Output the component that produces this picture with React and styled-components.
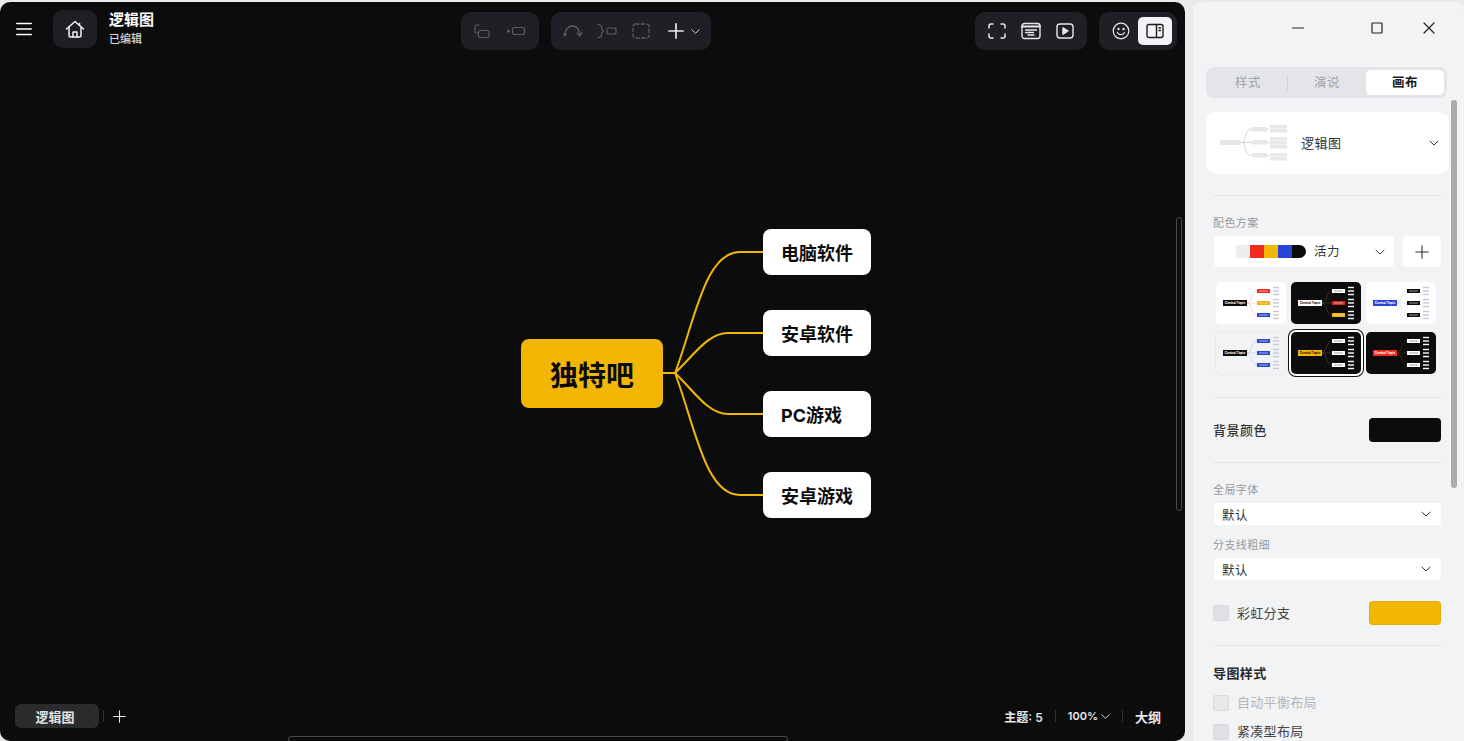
import styled, { createGlobalStyle } from "styled-components";

const GlobalStyle = createGlobalStyle`
    html, body, #root {
        margin: 0;
        padding: 0;
        height: 100%;
    }
    body {
        background: #e9eaec;
        overflow: hidden;
        font-family: Inter, "Noto Sans CJK SC", sans-serif;
    }
`

const Page = styled.div`
    width: 1464px;
    height: 741px;
    padding-top: 2px;
    box-sizing: border-box;
    display: flex;
    gap: 8px;
    overflow: hidden;
`

const Canvas = styled.main`
    position: relative;
    width: 1185px;
    flex-shrink: 0;
    background: #0c0c0d;
    border-radius: 10px;
    display: flex;
    flex-direction: column;
    justify-content: space-between;
    overflow: hidden;
`

const TopBar = styled.header`
    position: relative;
    display: flex;
    align-items: flex-start;
    padding: 8px 8px 0 16px;
`

const DocArea = styled.div`
    width: 445px;
    display: flex;
    align-items: center;
    color: #fff;
`

const IconButton = styled.button`
    border: 0;
    padding: 0 0 0 ${(p) => p.$shift || 0}px;
    background: ${(p) => (p.$active ? "#f2f3f5" : "transparent")};
    color: ${(p) => (p.$active ? "#1a1a1c" : p.$dim ? "#5c5d62" : "#e8e8ea")};
    width: ${(p) => p.$w || 34}px;
    height: 28px;
    border-radius: 5px;
    display: flex;
    align-items: center;
    justify-content: center;
    gap: ${(p) => p.$gap || 0}px;
`

const HomeButton = styled.button`
    border: 0;
    padding: 0;
    margin-left: 21px;
    width: 44px;
    height: 38px;
    border-radius: 10px;
    background: #1f2025;
    color: #f2f2f2;
    display: flex;
    align-items: center;
    justify-content: center;
`

const DocTitle = styled.div`
    margin-left: 12px;
    padding-bottom: 2px;
    display: flex;
    flex-direction: column;
    gap: 3px;
`

const DocName = styled.div`
    font-size: 15px;
    line-height: 18px;
    font-weight: 700;
`

const DocStatus = styled.div`
    font-size: 11px;
    line-height: 14px;
    font-weight: 500;
    color: #d8d8da;
`

const ToolGroup = styled.div`
    margin-top: 2px;
    height: 38px;
    padding: 0 ${(p) => p.$pad ?? 5}px;
    box-sizing: border-box;
    background: #1f2025;
    border-radius: 10px;
    display: flex;
    align-items: center;
    margin-left: ${(p) => p.$left || 0}px;
`

const RightTools = styled.div`
    margin-left: auto;
    display: flex;
    gap: 12px;
`

const BottomBar = styled.footer`
    position: relative;
    display: flex;
    align-items: center;
    justify-content: space-between;
    padding: 0 24px 11px 15px;
    color: #e6e6e8;
`

const SheetTabs = styled.div`
    display: flex;
    align-items: center;
`

const SheetTab = styled.div`
    width: 84px;
    height: 24px;
    box-sizing: border-box;
    padding-right: 4px;
    border-radius: 6px;
    background: #2a2b2d;
    font-size: 13px;
    font-weight: 700;
    color: #e2e2e2;
    display: flex;
    align-items: center;
    justify-content: center;
`

const StatusGroup = styled.div`
    display: flex;
    align-items: center;
`

const StatusText = styled.span`
    font-size: ${(p) => p.$size || 12}px;
    font-weight: 600;
    display: flex;
    align-items: center;
    gap: 3px;
`

const BarSep = styled.i`
    width: 1px;
    height: 12px;
    background: #2e2f32;
    margin: 0 ${(p) => p.$gap || 12}px;
`

const MapNode = styled.div`
    position: absolute;
    left: ${(p) => p.$x}px;
    top: ${(p) => p.$y}px;
    box-sizing: border-box;
    width: 108px;
    height: 46px;
    padding-left: 18px;
    background: #fff;
    border-radius: 8px;
    color: #0c0c0d;
    font-size: 18px;
    font-weight: 700;
    display: flex;
    align-items: center;
    white-space: nowrap;
`

const RootNode = styled.div`
    position: absolute;
    left: 521px;
    top: 337px;
    width: 142px;
    height: 69px;
    background: #f2b705;
    border-radius: 8px;
    color: #0c0c0d;
    font-size: 28px;
    font-weight: 700;
    display: flex;
    align-items: center;
    justify-content: center;
`

const Links = styled.svg`
    position: absolute;
    left: 660px;
    top: 225px;
`

const ScrollV = styled.div`
    position: absolute;
    left: 1176px;
    top: 215px;
    width: 6px;
    height: 294px;
    box-sizing: border-box;
    border: 1px solid #4a4a4c;
    border-radius: 3px;
`

const ScrollH = styled.div`
    position: absolute;
    left: 288px;
    top: 734px;
    width: 500px;
    height: 6px;
    box-sizing: border-box;
    border: 1px solid #4a4a4c;
    border-radius: 3px;
`

const Panel = styled.aside`
    position: relative;
    flex: 1;
    background: #f2f3f5;
    border-radius: 8px 8px 0 0;
    overflow: hidden;
    display: flex;
    flex-direction: column;
`

const WindowBar = styled.div`
    height: 65px;
    flex-shrink: 0;
    display: flex;
    align-items: flex-start;
    color: #222;
`

const WinButton = styled.span`
    position: absolute;
    top: 18px;
    left: ${(p) => p.$x}px;
    width: 16px;
    height: 16px;
    display: flex;
`

const Tabs = styled.div`
    margin-left: 13px;
    width: 241px;
    height: 31px;
    box-sizing: border-box;
    padding: 3px;
    border-radius: 8px;
    background: #e4e5e8;
    display: flex;
    align-items: center;
    flex-shrink: 0;
`

const Tab = styled.div`
    flex: ${(p) => (p.$active ? "0 0 78px" : 1)};
    height: 25px;
    box-sizing: border-box;
    padding-bottom: 2px;
    border-radius: 5px;
    background: ${(p) => (p.$active ? "#fff" : "transparent")};
    color: ${(p) => (p.$active ? "#1c1c1e" : "#a3a4a8")};
    font-size: 12.5px;
    font-weight: ${(p) => (p.$active ? 700 : 400)};
    letter-spacing: 0.5px;
    display: flex;
    align-items: center;
    justify-content: center;
`

const TabSep = styled.i`
    width: 1px;
    height: 16px;
    background: #cfd0d3;
`

const Thumb = styled.div`
    position: absolute;
    left: 258px;
    top: 98px;
    width: 6px;
    height: 388px;
    border-radius: 3px;
    background: #ababad;
`

const LayoutCard = styled.div`
    margin: 14px 0 0 13px;
    width: 243px;
    height: 62px;
    flex-shrink: 0;
    box-sizing: border-box;
    padding: 0 10px 0 13px;
    border-radius: 10px;
    background: #fff;
    display: flex;
    align-items: center;
    font-size: 13px;
    color: #333;
`

const CardLabel = styled.span`
    margin-left: 14px;
    padding-bottom: 2px;
    flex: 1;
    letter-spacing: 0.5px;
`

const Sections = styled.div`
    padding: 0 23px 0 20px;
    display: flex;
    flex-direction: column;
`

const Divider = styled.hr`
    width: 100%;
    margin: ${(p) => p.$top || 0}px 0 0;
    border: 0;
    height: 1px;
    flex-shrink: 0;
    background: #e3e4e7;
`

const SmallLabel = styled.div`
    margin-top: ${(p) => p.$top || 0}px;
    font-size: 11px;
    line-height: 14px;
    letter-spacing: 0.4px;
    color: #98999d;
`

const SchemeRow = styled.div`
    margin-top: 6px;
    display: flex;
    gap: 9px;
`

const SelectBox = styled.div`
    flex-grow: 1;
    height: ${(p) => p.$h || 22}px;
    margin: ${(p) => p.$top || 0}px 0 0 1px;
    box-sizing: border-box;
    padding: 0 ${(p) => p.$right || 10}px 0 ${(p) => p.$left || 8}px;
    background: #fff;
    border-radius: 4px;
    font-size: 12.5px;
    letter-spacing: 0.5px;
    color: #333;
    display: flex;
    align-items: center;
    justify-content: space-between;
`

const SchemeValue = styled.span`
    display: flex;
    align-items: center;
`

const SchemeName = styled.span`
    padding-bottom: 2px;
`

const Swatches = styled.span`
    display: flex;
    height: 13px;
    margin: 0 8px 0 0;
`

const Chip = styled.i`
    width: 14px;
    height: 13px;
    background: ${(p) => p.$c};
    border-radius: ${(p) => (p.$end ? "0 7px 7px 0" : 0)};
`

const SquareButton = styled.div`
    width: 38px;
    height: 31px;
    flex-shrink: 0;
    background: #fff;
    border-radius: 4px;
    color: #333;
    display: flex;
    align-items: center;
    justify-content: center;
`

const ThemeGrid = styled.div`
    margin: 15px 0 0 3px;
    display: grid;
    grid-template-columns: repeat(3, 70px);
    grid-auto-rows: 42px;
    column-gap: 5px;
    row-gap: 8px;
`

const ThemeCard = styled.div`
    border-radius: 5px;
    overflow: hidden;
    background: ${(p) => p.$bg};
    box-shadow: ${(p) =>
        p.$selected ? "0 0 0 2px #fff, 0 0 0 3px #111" : p.$flat ? "0 0 0 1px #e8e9eb" : "none"};
    svg {
        display: block;
    }
`

const SettingRow = styled.div`
    margin-top: ${(p) => p.$top || 0}px;
    display: flex;
    align-items: center;
    justify-content: space-between;
    height: 24px;
`

const SettingText = styled.span`
    padding-bottom: 2px;
    font-size: 13px;
    letter-spacing: 0.5px;
    color: #333;
    font-weight: 500;
`

const ColorSwatch = styled.div`
    width: 72px;
    height: 24px;
    border-radius: 4px;
    background: ${(p) => p.$c};
    box-shadow: inset 0 0 0 1px rgba(0, 0, 0, 0.06);
`

const CheckLine = styled.label`
    margin-top: ${(p) => p.$top || 0}px;
    display: flex;
    align-items: center;
    gap: 8px;
    height: 17px;
    font-size: 13px;
    letter-spacing: 0.3px;
    color: ${(p) => (p.$off ? "#b4b5b8" : "#444")};
`

const CheckText = styled.span`
    padding-bottom: 2px;
`

const CheckBox = styled.i`
    width: 16px;
    height: 16px;
    border-radius: 3px;
    background: ${(p) => (p.$off ? "#e8e9eb" : "#e0e1e4")};
    box-shadow: inset 0 0 0 1px #d9dadd;
`

const SectionTitle = styled.div`
    margin-top: ${(p) => p.$top || 0}px;
    font-size: 13px;
    line-height: 18px;
    font-weight: 700;
    letter-spacing: 0.4px;
    color: #2a2a2c;
`

const Icon = ({ w = 18, h = 18, sw = 1.5, children }) => (
    <svg width={w} height={h} viewBox={`0 0 ${w} ${h}`} fill="none" stroke="currentColor" strokeWidth={sw} strokeLinecap="round" strokeLinejoin="round">
        {children}
    </svg>
)

const Chevron = ({ size = 10 }) => (
    <svg width={size} height={size} viewBox="0 0 10 10" fill="none" stroke="currentColor" strokeWidth="1" strokeLinecap="round" strokeLinejoin="round">
        <path d="M1 3.2 5 7l4-3.8" />
    </svg>
)

const Plus = ({ size = 18, sw = 1.6 }) => (
    <svg width={size} height={size} viewBox="0 0 18 18" fill="none" stroke="currentColor" strokeWidth={sw} strokeLinecap="round">
        <path d="M9 1v16M1 9h16" />
    </svg>
)

// thumbnail of a mind map, colours come from the theme
const MiniMap = ({ root, rootText, branches, leaf, line }) => {
    const ys = [9, 21, 33]
    return (
        <svg width="70" height="42" viewBox="0 0 70 42">
            {ys.map((y) => (
                <path key={y} d={`M31 21C36 21 35 ${y} 41 ${y}`} fill="none" stroke={line} strokeWidth="0.5" />
            ))}
            <rect x="7" y="18" width="24" height="6" fill={root} />
            <text x="19" y="22.2" fontSize="3.2" fontWeight="700" textAnchor="middle" fill={rootText} fontFamily="Inter, sans-serif">Central Topic</text>
            {ys.map((y, i) => (
                <g key={y}>
                    <rect x="41" y={y - 2} width="13" height="4" fill={branches[i]} />
                    <path d={`M43 ${y}h9`} stroke={branches[i] === "#fff" ? "#777" : "#ddd"} strokeWidth="0.7" />
                    {[-3.5, 0, 3.5].map((d) => (
                        <rect key={d} x="57" y={y + d - 0.7} width="6" height="1.4" fill={leaf} />
                    ))}
                </g>
            ))}
        </svg>
    )
}

const themes = [
    { bg: "#fff", root: "#0c0c0d", rootText: "#fff", branches: ["#ee2b1c", "#f2b705", "#2a44d8"], leaf: "#c9c9d6", line: "#e5b9b0" },
    { bg: "#0c0c0d", root: "#fff", rootText: "#111", branches: ["#fff", "#d9281c", "#f2b705"], leaf: "#fff", line: "#6a5a30" },
    { bg: "#fff", root: "#2a44d8", rootText: "#fff", branches: ["#0c0c0d", "#0c0c0d", "#0c0c0d"], leaf: "#c6c8d8", line: "#c5cbf0" },
    { bg: "#f2f3f5", root: "#0c0c0d", rootText: "#fff", branches: ["#2a44d8", "#2a44d8", "#2a44d8"], leaf: "#c8c9d4", line: "#b9c2ee", flat: true },
    { bg: "#0c0c0d", root: "#f2b705", rootText: "#111", branches: ["#fff", "#fff", "#fff"], leaf: "#fff", line: "#6a5a20", selected: true },
    { bg: "#0c0c0d", root: "#ee2b1c", rootText: "#fff", branches: ["#fff", "#fff", "#fff"], leaf: "#fff", line: "#6a2a20" },
]

const App = () => {
    return (
        <Page>
            <GlobalStyle />
            <Canvas>
                <Links width="110" height="290" viewBox="660 225 110 290" fill="none" stroke="#f2b705" strokeWidth="2">
                    <path d="M663 371H675C695 318 705 250 740 250H763" />
                    <path d="M663 371H675C695 352 708 331 728 331H763" />
                    <path d="M663 371H675C695 390 708 412 728 412H763" />
                    <path d="M663 371H675C695 424 705 493 740 493H763" />
                </Links>
                <RootNode>独特吧</RootNode>
                <MapNode $x={763} $y={227}>电脑软件</MapNode>
                <MapNode $x={763} $y={308}>安卓软件</MapNode>
                <MapNode $x={763} $y={389}>PC游戏</MapNode>
                <MapNode $x={763} $y={470}>安卓游戏</MapNode>
                <ScrollV />
                <ScrollH />

                <TopBar>
                    <DocArea>
                        <Icon w={16} h={14} sw={1.6}>
                            <path d="M.8 1.5h14.4M.8 7h14.4M.8 12.5h14.4" />
                        </Icon>
                        <HomeButton>
                            <Icon w={20} h={20} sw={1.5}>
                                <path d="M1.5 10 10 2.5 18.5 10" />
                                <path d="M4 8v8.5a1.5 1.5 0 0 0 1.5 1.5h9a1.5 1.5 0 0 0 1.5-1.5V8" />
                                <path d="M8 18v-5h4v5" />
                                <path d="M14.5 4.5v1.5" />
                            </Icon>
                        </HomeButton>
                        <DocTitle>
                            <DocName>逻辑图</DocName>
                            <DocStatus>已编辑</DocStatus>
                        </DocTitle>
                    </DocArea>
                    <ToolGroup $pad={5}>
                        <IconButton $dim $w={32}>
                            <Icon w={16} h={14} sw={1.2}>
                                <rect x="4.5" y="6.5" width="10.5" height="7" rx="2" />
                                <path d="M5.5 1H2.5A1.5 1.5 0 0 0 1 2.5v5A1.5 1.5 0 0 0 2.5 9h2" />
                            </Icon>
                        </IconButton>
                        <IconButton $dim $w={36}>
                            <Icon w={20} h={10} sw={1.2}>
                                <rect x="6.5" y="1.5" width="12" height="7" rx="2" />
                                <circle cx="2.5" cy="5" r="1" fill="currentColor" />
                            </Icon>
                        </IconButton>
                    </ToolGroup>
                    <ToolGroup $left={12} $pad={4}>
                        <IconButton $dim $w={35}>
                            <Icon w={20} h={18} sw={1.3}>
                                <path d="M2 12.5C2 7 5.5 4 9.5 4s6.5 3 7.5 8.5" />
                                <path d="m14 11 3 3 2-3.5" />
                                <circle cx="2" cy="12.5" r="1" fill="currentColor" />
                            </Icon>
                        </IconButton>
                        <IconButton $dim $w={33}>
                            <Icon w={20} h={16} sw={1.2}>
                                <path d="M1 1.5c3 0 3.5 1 3.5 2.5s0 3 2 4c-2 1-2 2.500-2 4s-.5 2.500-3.500 2.500" />
                                <rect x="10" y="5" width="9" height="6" rx="1.600" />
                            </Icon>
                        </IconButton>
                        <IconButton $dim $w={36}>
                            <Icon w={18} h={16} sw={1.3}>
                                <rect x="1" y="1" width="16" height="14" rx="2.5" strokeDasharray="3.4 2.4" />
                            </Icon>
                        </IconButton>
                        <IconButton $w={48} $gap={7} $shift={2}>
                            <Plus size={16} sw={1.9} />
                            <Chevron size={9} />
                        </IconButton>
                    </ToolGroup>
                    <RightTools>
                        <ToolGroup $pad={5}>
                            <IconButton>
                                <Icon w={18} h={16} sw={1.5}>
                                    <path d="M1 5V3a2 2 0 0 1 2-2h2M13 1h2a2 2 0 0 1 2 2v2M17 11v2a2 2 0 0 1-2 2h-2M5 15H3a2 2 0 0 1-2-2v-2" />
                                </Icon>
                            </IconButton>
                            <IconButton>
                                <Icon w={20} h={18} sw={1.4}>
                                    <rect x="1" y="1.5" width="18" height="15" rx="2.5" />
                                    <path d="M1 4.5h18" strokeWidth="2" />
                                    <path d="M4.5 8h11M4.5 10.5h8M7 13h6" />
                                </Icon>
                            </IconButton>
                            <IconButton>
                                <Icon w={18} h={16} sw={1.4}>
                                    <rect x="1" y="1" width="16" height="14" rx="3" />
                                    <path d="M7 4.8v6.4L12 8z" fill="currentColor" />
                                </Icon>
                            </IconButton>
                        </ToolGroup>
                        <ToolGroup $pad={5}>
                            <IconButton>
                                <Icon w={18} h={18} sw={1.2}>
                                    <circle cx="9" cy="9" r="7.8" />
                                    <path d="M5.5 10.5c.8 1.5 2 2.2 3.5 2.2s2.7-.7 3.5-2.2" />
                                    <circle cx="6.5" cy="7" r=".6" fill="currentColor" />
                                    <circle cx="11.5" cy="7" r=".6" fill="currentColor" />
                                </Icon>
                            </IconButton>
                            <IconButton $active>
                                <Icon w={18} h={16} sw={1.4}>
                                    <rect x="1" y="1.5" width="16" height="13" rx="2" />
                                    <path d="M10.5 1.5v13" />
                                    <path d="M13 5h1.5M13 7.5h1.5" />
                                </Icon>
                            </IconButton>
                        </ToolGroup>
                    </RightTools>
                </TopBar>

                <BottomBar>
                    <SheetTabs>
                        <SheetTab>逻辑图</SheetTab>
                        <BarSep $gap={4} />
                        <IconButton $w={22}>
                            <Plus size={13} sw={1.5} />
                        </IconButton>
                    </SheetTabs>
                    <StatusGroup>
                        <StatusText>主题: 5</StatusText>
                        <BarSep />
                        <StatusText $size={11}>100% <Chevron size={9} /></StatusText>
                        <BarSep />
                        <StatusText $size={13}>大纲</StatusText>
                    </StatusGroup>
                </BottomBar>
            </Canvas>

            <Panel>
                <WindowBar>
                    <WinButton $x={97}>
                        <Icon w={16} h={16} sw={1.2}><path d="M2.5 8h11" /></Icon>
                    </WinButton>
                    <WinButton $x={176}>
                        <Icon w={16} h={16} sw={1.2}><rect x="3" y="3" width="10" height="10" rx=".8" /></Icon>
                    </WinButton>
                    <WinButton $x={228}>
                        <Icon w={16} h={16} sw={1.2}><path d="m3 3 10 10M13 3 3 13" /></Icon>
                    </WinButton>
                </WindowBar>
                <Tabs>
                    <Tab>样式</Tab>
                    <TabSep />
                    <Tab>演说</Tab>
                    <Tab $active>画布</Tab>
                </Tabs>
                <Thumb />
                <LayoutCard>
                    <svg width="68" height="40" viewBox="0 0 68 40" fill="none" stroke="#c4c4c6" strokeWidth="0.7">
                        <rect x="1" y="17" width="21" height="5" fill="#e6e6e8" stroke="none" />
                        <path d="M22 19.500h23M24 19.500c3-3 2-13.500 8-13.500h13M24 19.500c3 3 2 13 8 13h13M46 6h4M46 19.500h4M46 32.500h4" />
                        {[4, 17, 30].map((y) => (
                            <rect key={y} x="33" y={y} width="15" height="4.500" fill="#e8e8ea" stroke="none" />
                        ))}
                        {[2, 6, 14, 18, 22, 30, 34].map((y) => (
                            <rect key={y} x="51" y={y} width="17" height="3.500" fill="#e8e8ea" stroke="none" />
                        ))}
                    </svg>
                    <CardLabel>逻辑图</CardLabel>
                    <Chevron />
                </LayoutCard>
                <Sections>
                    <Divider $top={21} />
                    <SmallLabel $top={20}>配色方案</SmallLabel>
                    <SchemeRow>
                        <SelectBox $h={31} $left={22} $right={9}>
                            <SchemeValue>
                                <Swatches>
                                    <Chip $c="#eeeeee" />
                                    <Chip $c="#ee2b1c" />
                                    <Chip $c="#f2b705" />
                                    <Chip $c="#2a44d8" />
                                    <Chip $c="#0c0c0d" $end />
                                </Swatches>
                                <SchemeName>活力</SchemeName>
                            </SchemeValue>
                            <Chevron />
                        </SelectBox>
                        <SquareButton>
                            <Plus size={14} sw={1.4} />
                        </SquareButton>
                    </SchemeRow>
                    <ThemeGrid>
                        {themes.map((t, i) => (
                            <ThemeCard key={i} $bg={t.bg} $selected={t.selected} $flat={t.flat}>
                                <MiniMap {...t} />
                            </ThemeCard>
                        ))}
                    </ThemeGrid>
                    <Divider $top={23} />
                    <SettingRow $top={20}>
                        <SettingText>背景颜色</SettingText>
                        <ColorSwatch $c="#0c0c0d" />
                    </SettingRow>
                    <Divider $top={20} />
                    <SmallLabel $top={20}>全局字体</SmallLabel>
                    <SelectBox $top={6}>默认<Chevron /></SelectBox>
                    <SmallLabel $top={13}>分支线粗细</SmallLabel>
                    <SelectBox $top={6}>默认<Chevron /></SelectBox>
                    <SettingRow $top={21}>
                        <CheckLine>
                            <CheckBox />
                            <CheckText>彩虹分支</CheckText>
                        </CheckLine>
                        <ColorSwatch $c="#f2b705" />
                    </SettingRow>
                    <Divider $top={20} />
                    <SectionTitle $top={18}>导图样式</SectionTitle>
                    <CheckLine $off $top={12}>
                        <CheckBox $off />
                        <CheckText>自动平衡布局</CheckText>
                    </CheckLine>
                    <CheckLine $top={12}>
                        <CheckBox />
                        <CheckText>紧凑型布局</CheckText>
                    </CheckLine>
                </Sections>
            </Panel>
        </Page>
    )
}

export default App
